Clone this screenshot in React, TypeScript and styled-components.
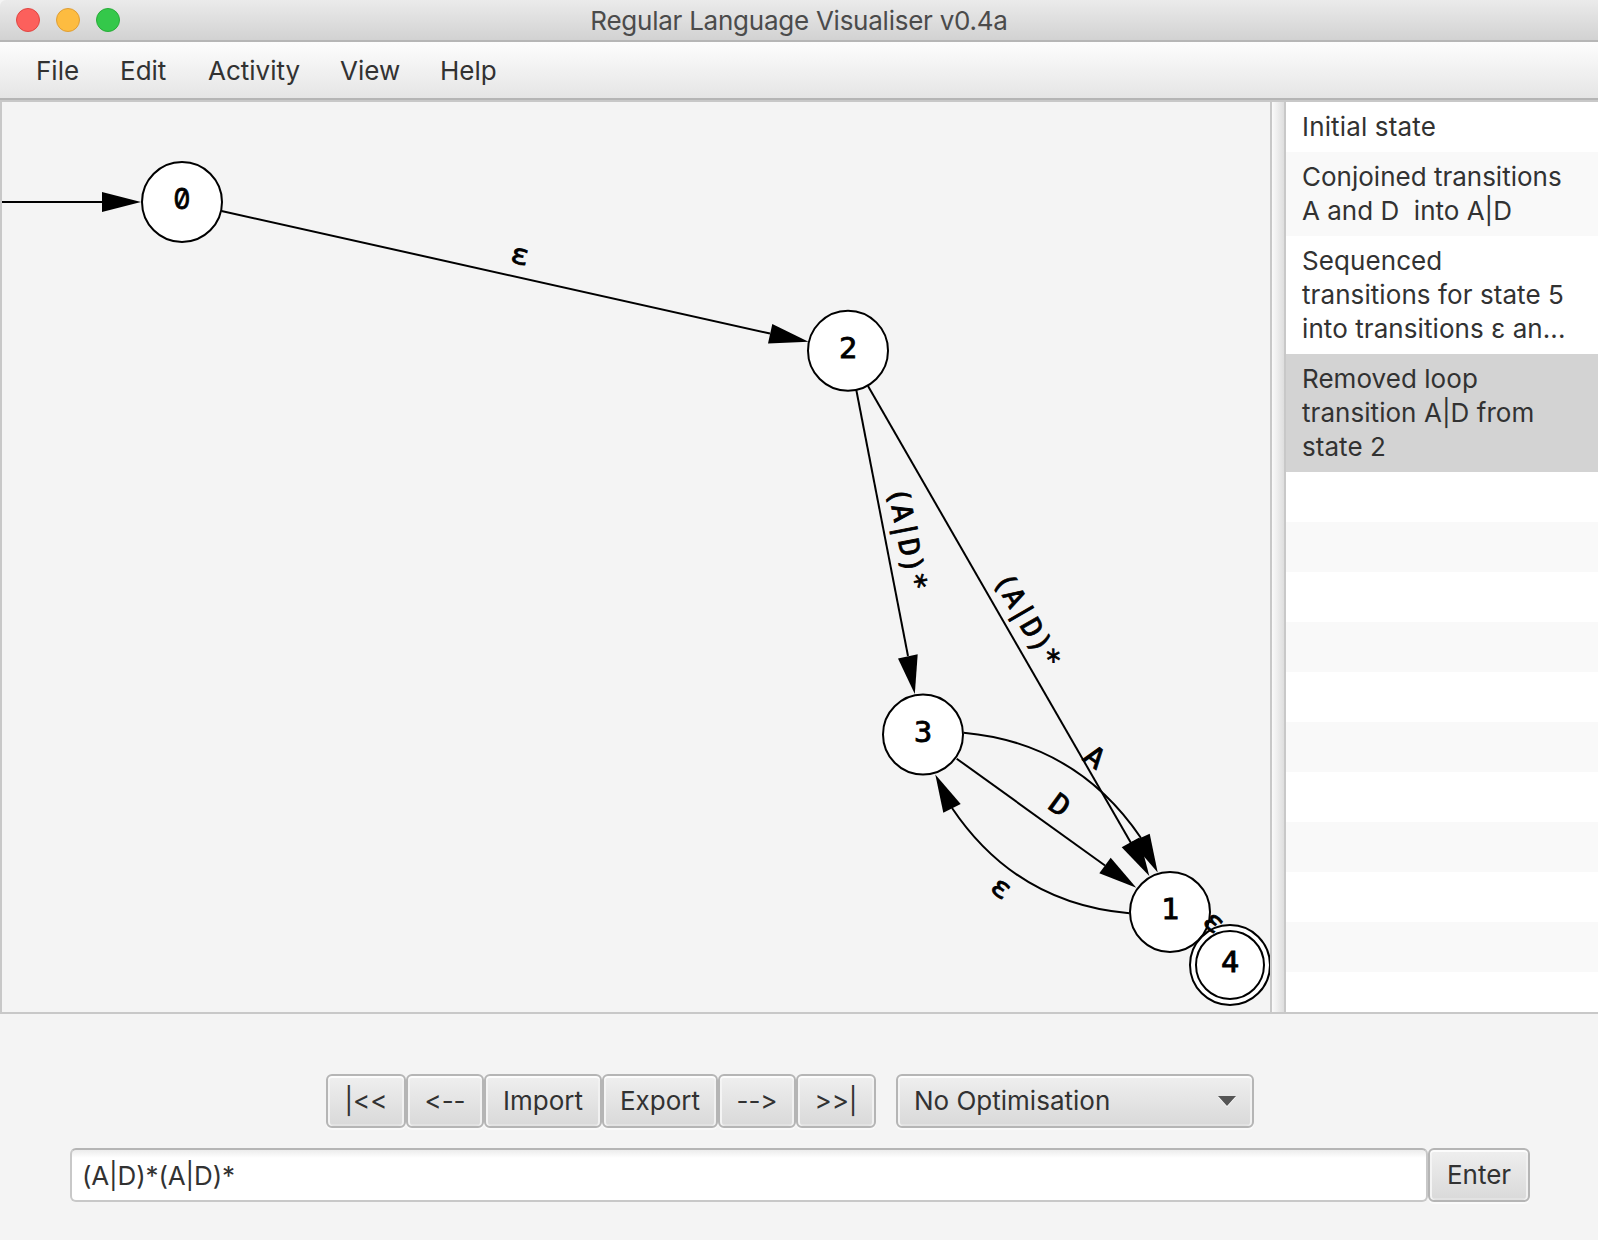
import React from "react";
import styled, { createGlobalStyle } from "styled-components";

const Global = createGlobalStyle`
  body { margin: 0; background: #f4f4f4; }
  * { box-sizing: border-box; }
`;
const Window = styled.div`
  width: 1598px; height: 1240px; display: flex; flex-direction: column; overflow: hidden;
  background: #f4f4f4; color: #323232; font: 26px/34px Inter, "Liberation Sans", sans-serif;
  font-feature-settings: "calt" 0;
`;
const TitleBar = styled.header`
  height: 42px; flex: none; display: grid; grid-template-columns: 1fr auto 1fr; align-items: center;
  background: linear-gradient(#ebebeb, #d2d2d2); border-bottom: 2px solid #b6b6b6;
  border-top-left-radius: 6px;
`;
const Lights = styled.div`display: flex; gap: 16px; padding-left: 16px;`;
const Light = styled.span<{ $fill: string; $edge: string }>`
  width: 24px; height: 24px; border-radius: 50%;
  background: ${p => p.$fill}; border: 1px solid ${p => p.$edge};
`;
const Title = styled.h1`margin: 0; padding-top: 2px; font: inherit; color: #4b4b4b; letter-spacing: -0.25px;`;
const MenuBar = styled.nav`
  height: 60px; flex: none; display: flex; gap: 42px; padding: 12px 0 0 36px;
  background: linear-gradient(#fdfdfd, #e5e5e5 56px);
  border-bottom: 2px solid #c8c8c8; box-shadow: inset 0 -2px #b5b5b5;
`;
const MenuItem = styled.span<{ $w: number }>`width: ${p => p.$w}px; white-space: nowrap;`;
const Workspace = styled.main`
  height: 912px; flex: none; display: flex; border-bottom: 2px solid #c8c8c8;
`;
const Canvas = styled.div`
  width: 1272px; border: solid #c8c8c8; border-width: 0 2px; overflow: hidden;
  svg { display: block; }
`;
const Divider = styled.div`
  width: 14px; border-right: 2px solid #c8c8c8; background: linear-gradient(90deg, #fafafa, #dedede);
`;
const List = styled.ul`flex: 1; margin: 0; padding: 0; list-style: none; overflow: hidden; background: #fff;`;
const Row = styled.li<{ $selected?: boolean }>`
  min-height: 50px; padding: 8px 0 8px 16px; white-space: pre;
  background: ${p => (p.$selected ? "#d3d3d3" : "#fff")};
  &:nth-child(even) { background: ${p => (p.$selected ? "#d3d3d3" : "#f9f9f9")}; }
`;
const Line = styled.span<{ $ls: number }>`display: block; letter-spacing: ${p => p.$ls}px;`;
const Controls = styled.section`padding: 60px 0 0 70px; display: flex; flex-direction: column; gap: 20px;`;
const Tools = styled.div`display: flex; padding-left: 256px;`;
const Button = styled.button<{ $w: number; $ls?: number }>`
  width: ${p => p.$w}px; height: 54px; padding: 0; flex: none; border: 2px solid #b5b5b5; border-radius: 6px;
  background: linear-gradient(#efefef, #d9d9d9);
  box-shadow: inset 0 2px #fcfcfc, inset 2px 0 #f4f4f4, inset -2px 0 #f1f1f1, inset 0 -2px #e2e2e2, 0 2px #fafafa;
  font: inherit; font-feature-settings: inherit; color: inherit; letter-spacing: ${p => p.$ls ?? 0}px;
`;
const Select = styled(Button)`
  margin-left: 20px; display: flex; align-items: center; justify-content: space-between; padding: 0 16px;
`;
const Arrow = styled.span`
  border: solid transparent; border-width: 10px 9px 0; border-top-color: #555;
  filter: drop-shadow(0 1px #fff);
`;
const Entry = styled.div`display: flex;`;
const Input = styled.input`
  width: 1358px; height: 54px; flex: none; padding: 0 10px; border: 2px solid #c8c8c8; border-top-color: #b5b5b5; border-radius: 6px;
  background: linear-gradient(#ececec, #fff 8px); font: inherit; color: inherit; outline: none; letter-spacing: -0.15px;
`;
const Glyph = styled.text<{ $slashed?: boolean }>`
  font: 28px ${p => (p.$slashed ? "Inter" : '"DejaVu Sans Mono"')}, monospace;
  font-feature-settings: "zero" 1;
  text-anchor: middle; stroke: #000; stroke-width: .8px;
`;

const menus: [string, number][] = [["File", 42], ["Edit", 46], ["Activity", 90], ["View", 58], ["Help", 56]];
const history = [
  { lines: ["Initial state"], spacing: 0.15 },
  { lines: ["Conjoined transitions", "A and D  into A|D"], spacing: 0 },
  { lines: ["Sequenced", "transitions for state 5", "into transitions ε an..."], spacing: 0.08 },
  { lines: ["Removed loop", "transition A|D from", "state 2"], spacing: 0.05 },
];
const nodes = [
  { id: "0", x: 182, y: 202 }, { id: "2", x: 848, y: 350.7 }, { id: "3", x: 923, y: 734.5 },
  { id: "1", x: 1170, y: 912 }, { id: "4", x: 1230, y: 965, final: true },
];
const edges = [
  "M2 202H110", "M221.5 211L770 333.5", "M856.3 390L908 656", "M868 386L1131 843",
  "M956.7 758.7L1105 865.5", "M963.7 732.7Q1076.6 743 1141 838", "M1129.3 913.3Q1016.4 903.6 952 808",
];
const heads = [
  "102,192 141,202 102,212", "772.3,324 808.5,341.7 768,343.5", "898,658.5 914.8,694 917.7,654.3",
  "1121.7,847.3 1149.3,876 1139.3,837.5", "1099.3,873.3 1136.3,887.7 1110.7,857.7",
  "1149.7,833.7 1157.7,872.5 1131.5,842", "960.7,804 935.3,774.5 943.3,812.7",
];
const labels: [string, number, number, number][] = [
  ["ε", 518, 264, 12.5], ["(A|D)*", 898, 540.5, 79], ["(A|D)*", 1019, 625, 60],
  ["A", 1089, 765, 36], ["D", 1054, 813, 36], ["ε", 996, 895.5, 36], ["ε", 1208, 929, 41],
];

export default function App() {
  return (
    <Window>
      <Global />
      <TitleBar>
        <Lights>
          <Light $fill="#fc605c" $edge="#e04642" />
          <Light $fill="#fdbc40" $edge="#df9e35" />
          <Light $fill="#34c84a" $edge="#28ac38" />
        </Lights>
        <Title>Regular Language Visualiser v0.4a</Title>
      </TitleBar>
      <MenuBar>{menus.map(([m, w]) => <MenuItem key={m} $w={w}>{m}</MenuItem>)}</MenuBar>
      <Workspace>
        <Canvas>
          <svg width="1268" height="910" viewBox="2 102 1268 910">
            {edges.map(d => <path key={d} d={d} fill="none" stroke="#000" strokeWidth="2" />)}
            {heads.map(p => <polygon key={p} points={p} />)}
            {nodes.map(n => (
              <g key={n.id}>
                <circle cx={n.x} cy={n.y} r="40" fill="#fff" stroke="#000" strokeWidth="2" />
                {n.final && <circle cx={n.x} cy={n.y} r="34" fill="#fff" stroke="#000" strokeWidth="2" />}
                <Glyph $slashed={n.id === "0"}
                  transform={`translate(${n.x} ${n.y + 7}) scale(${n.id === "0" ? 0.95 : 1.08} 1)`}>
                  {n.id}
                </Glyph>
              </g>
            ))}
            {labels.map(([t, x, y, a], i) => (
              <Glyph key={i} transform={`translate(${x} ${y}) rotate(${a}) scale(${t.length > 1 ? 1.04 : 1.1} 1)`}>{t}</Glyph>
            ))}
          </svg>
        </Canvas>
        <Divider />
        <List>
          {history.map(({ lines, spacing }, i) => (
            <Row key={i} $selected={i === 3}>
              {lines.map(l => <Line key={l} $ls={spacing}>{l}</Line>)}
            </Row>
          ))}
          {Array.from({ length: 11 }, (_, i) => <Row key={`empty${i}`} />)}
        </List>
      </Workspace>
      <Controls>
        <Tools>
          <Button $w={80}>|&lt;&lt;</Button>
          <Button $w={78}>&lt;--</Button>
          <Button $w={118}>Import</Button>
          <Button $w={116}>Export</Button>
          <Button $w={78}>--&gt;</Button>
          <Button $w={80}>&gt;&gt;|</Button>
          <Select $w={358}>No Optimisation<Arrow /></Select>
        </Tools>
        <Entry>
          <Input defaultValue="(A|D)*(A|D)*" />
          <Button $w={102}>Enter</Button>
        </Entry>
      </Controls>
    </Window>
  );
}
